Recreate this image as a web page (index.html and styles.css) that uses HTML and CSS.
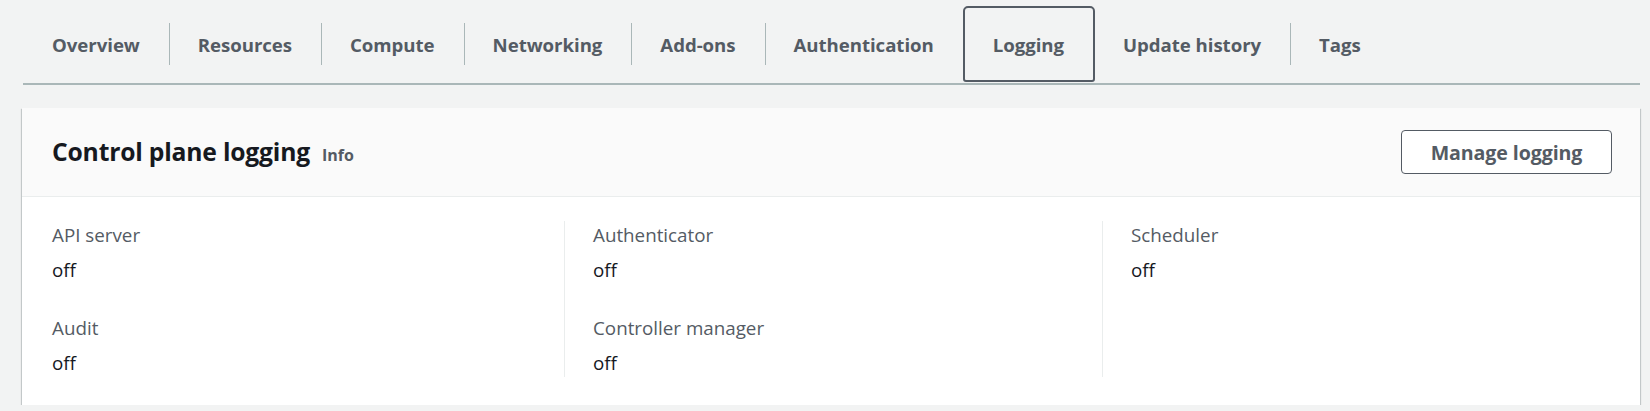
FILE: index.html
```html
<!DOCTYPE html>
<html lang="en">
<head>
<meta charset="utf-8">
<title>Cluster – Logging</title>
<link rel="stylesheet" href="styles.css">
</head>
<body>
<div class="page">
  <nav class="tabs">
    <a class="tab tab-first">Overview</a>
    <a class="tab">Resources</a>
    <a class="tab">Compute</a>
    <a class="tab">Networking</a>
    <a class="tab">Add-ons</a>
    <a class="tab">Authentication</a>
    <a class="tab tab-active">Logging</a>
    <a class="tab tab-after-active">Update history</a>
    <a class="tab">Tags</a>
  </nav>

  <section class="card">
    <header class="card-header">
      <div class="card-title">
        <h2>Control plane logging</h2>
        <span class="info">Info</span>
      </div>
      <button class="btn">Manage logging</button>
    </header>
    <div class="card-body">
      <div class="col">
        <div class="item">
          <div class="label">API server</div>
          <div class="value">off</div>
        </div>
        <div class="item">
          <div class="label">Audit</div>
          <div class="value">off</div>
        </div>
      </div>
      <div class="col col-divided">
        <div class="item">
          <div class="label">Authenticator</div>
          <div class="value">off</div>
        </div>
        <div class="item">
          <div class="label">Controller manager</div>
          <div class="value">off</div>
        </div>
      </div>
      <div class="col col-divided">
        <div class="item">
          <div class="label">Scheduler</div>
          <div class="value">off</div>
        </div>
      </div>
    </div>
  </section>
</div>
</body>
</html>
```

FILE: styles.css
```css
* { box-sizing: border-box; }

html, body {
  margin: 0;
  padding: 0;
  background: #f2f3f3;
}

body {
  font-family: "Open Sans", "Noto Sans", "Liberation Sans", sans-serif;
  color: #16191f;
}

.page {
  padding: 6px 10px 0 22px;
}

/* Tabs */
.tabs {
  display: flex;
  align-items: stretch;
  height: 79px;
  border-bottom: 2px solid #aab7b8;
  margin-left: 1px;
}

.tab {
  display: flex;
  align-items: center;
  height: 77px;
  padding: 0 29px;
  font-size: 18.65px;
  font-weight: 700;
  color: #545b64;
  position: relative;
  white-space: nowrap;
  letter-spacing: -0.05px;
}

.tab::before {
  content: "";
  position: absolute;
  left: 0;
  top: 17px;
  height: 42px;
  width: 1px;
  background: #aab7b8;
}

.tab-first::before,
.tab-active::before,
.tab-after-active::before {
  display: none;
}

.tab-active {
  border: 2px solid #545b64;
  border-radius: 5px 5px 3px 3px;
  padding: 0 29px 0 28px;
  height: 76px;
  margin-right: -1px;
}

/* Card */
.card {
  margin-top: 23px;
  background: #ffffff;
  box-shadow: 0 1px 1px 0 rgba(0, 28, 36, 0.3),
              1px 1px 1px 0 rgba(0, 28, 36, 0.15),
              -1px 1px 1px 0 rgba(0, 28, 36, 0.15);
}

.card-header {
  display: flex;
  align-items: center;
  justify-content: space-between;
  background: #fafafa;
  border-bottom: 1px solid #eaeded;
  padding: 22px 28px 22px 30px;
}

.card-title {
  display: flex;
  align-items: baseline;
  gap: 12px;
}

.card-title h2 {
  margin: 0;
  font-size: 24.7px;
  font-weight: 700;
  color: #16191f;
  line-height: 32px;
  letter-spacing: -0.2px;
}

.info {
  font-size: 16px;
  font-weight: 700;
  color: #545b64;
}

.btn {
  font-family: inherit;
  font-size: 19.6px;
  font-weight: 700;
  color: #545b64;
  background: #ffffff;
  border: 1px solid #545b64;
  border-radius: 4px;
  height: 44px;
  width: 211px;
  padding: 0;
  letter-spacing: -0.1px;
}

/* Body */
.card-body {
  display: grid;
  grid-template-columns: 1fr 1fr 1fr;
  padding: 24px 0 28px 4px;
}

.col {
  display: flex;
  flex-direction: column;
  gap: 30px;
  padding-left: 26px;
}

.col-divided {
  border-left: 1px solid #eaeded;
  padding-left: 28px;
}

.item {
  display: flex;
  flex-direction: column;
  gap: 7px;
}

.label {
  font-size: 18.8px;
  line-height: 28px;
  color: #545b64;
}

.value {
  font-size: 18.8px;
  line-height: 28px;
  color: #16191f;
}
```
